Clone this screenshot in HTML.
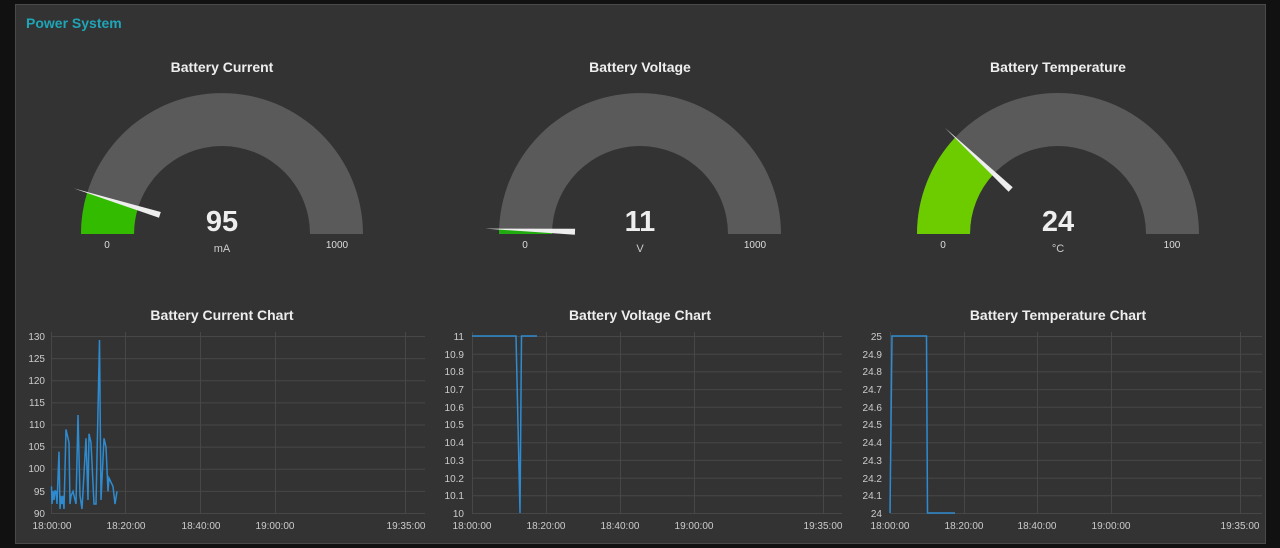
<!DOCTYPE html>
<html><head><meta charset="utf-8"><style>
html,body{margin:0;padding:0;background:#111;width:1280px;height:548px;overflow:hidden}
svg{display:block}
text{font-family:"Liberation Sans",sans-serif}
.t{font-size:14px;font-weight:bold;fill:#eee;text-anchor:middle}
.ax{font-size:10px;fill:#ccc}
.g{stroke:#474747;stroke-width:1}
</style></head><body>
<svg width="1280" height="548" viewBox="0 0 1280 548">
<rect x="0" y="0" width="1280" height="548" fill="#111"/>
<rect x="15.5" y="4.5" width="1250" height="539" fill="#333" stroke="#4a4a4a"/>
<text x="26" y="28" style="font-size:14px;font-weight:bold;fill:#1fa5b8">Power System</text>

<!-- Gauge 1 -->
<text class="t" x="222" y="72">Battery Current</text>
<path d="M81,234 A141 141 0 0 1 363,234 L310,234 A88 88 0 0 0 134,234 Z" fill="#5a5a5a"/>
<path d="M81,234 A141 141 0 0 1 87.2,192.5 L137.9,208.1 A88 88 0 0 0 134,234 Z" fill="#33bb00"/>
<polygon points="73.8,188.4 160.8,212.0 159.0,217.8" fill="#eee"/>
<text x="222" y="231" style="font-size:29px;font-weight:bold;fill:#eee;text-anchor:middle">95</text>
<text x="222" y="252" style="font-size:11px;fill:#ccc;text-anchor:middle">mA</text>
<text x="107" y="248" style="font-size:10px;fill:#ddd;text-anchor:middle">0</text>
<text x="337" y="248" style="font-size:10px;fill:#ddd;text-anchor:middle">1000</text>

<!-- Gauge 2 -->
<text class="t" x="640" y="72">Battery Voltage</text>
<path d="M499,234 A141 141 0 0 1 781,234 L728,234 A88 88 0 0 0 552,234 Z" fill="#5a5a5a"/>
<path d="M499,234 A141 141 0 0 1 499.1,229.1 L552.1,230.9 A88 88 0 0 0 552,234 Z" fill="#22aa11"/>
<polygon points="485.1,228.6 575.1,228.7 574.9,234.7" fill="#eee"/>
<text x="640" y="231" style="font-size:29px;font-weight:bold;fill:#eee;text-anchor:middle">11</text>
<text x="640" y="252" style="font-size:11px;fill:#ccc;text-anchor:middle">V</text>
<text x="525" y="248" style="font-size:10px;fill:#ddd;text-anchor:middle">0</text>
<text x="755" y="248" style="font-size:10px;fill:#ddd;text-anchor:middle">1000</text>

<!-- Gauge 3 -->
<text class="t" x="1058" y="72">Battery Temperature</text>
<path d="M917,234 A141 141 0 0 1 1199,234 L1146,234 A88 88 0 0 0 970,234 Z" fill="#5a5a5a"/>
<path d="M917,234 A141 141 0 0 1 955.2,137.5 L993.8,173.8 A88 88 0 0 0 970,234 Z" fill="#6ccc00"/>
<polygon points="945.0,127.9 1012.7,187.3 1008.6,191.7" fill="#eee"/>
<text x="1058" y="231" style="font-size:29px;font-weight:bold;fill:#eee;text-anchor:middle">24</text>
<text x="1058" y="252" style="font-size:11px;fill:#ccc;text-anchor:middle">°C</text>
<text x="943" y="248" style="font-size:10px;fill:#ddd;text-anchor:middle">0</text>
<text x="1172" y="248" style="font-size:10px;fill:#ddd;text-anchor:middle">100</text>

<!-- Chart 1 -->
<text class="t" x="222" y="320">Battery Current Chart</text>
<g class="g">
<line x1="51" y1="336.5" x2="425" y2="336.5"/><line x1="51" y1="358.6" x2="425" y2="358.6"/><line x1="51" y1="380.8" x2="425" y2="380.8"/><line x1="51" y1="402.9" x2="425" y2="402.9"/><line x1="51" y1="425" x2="425" y2="425"/><line x1="51" y1="447.1" x2="425" y2="447.1"/><line x1="51" y1="469.3" x2="425" y2="469.3"/><line x1="51" y1="491.4" x2="425" y2="491.4"/><line x1="51" y1="513.5" x2="425" y2="513.5"/>
<line x1="51.5" y1="332" x2="51.5" y2="513"/><line x1="125.5" y1="332" x2="125.5" y2="513"/><line x1="200.5" y1="332" x2="200.5" y2="513"/><line x1="275.5" y1="332" x2="275.5" y2="513"/><line x1="405.5" y1="332" x2="405.5" y2="513"/>
</g>
<g class="ax" text-anchor="end">
<text x="45" y="340">130</text><text x="45" y="362">125</text><text x="45" y="384">120</text><text x="45" y="406">115</text><text x="45" y="428">110</text><text x="45" y="450">105</text><text x="45" y="472">100</text><text x="45" y="495">95</text><text x="45" y="517">90</text>
</g>
<g class="ax" text-anchor="middle">
<text x="52" y="529">18:00:00</text><text x="126" y="529">18:20:00</text><text x="201" y="529">18:40:00</text><text x="275" y="529">19:00:00</text><text x="406" y="529">19:35:00</text>
</g>
<polyline fill="none" stroke="#2e8bd0" stroke-width="1.5" points="51.5,486.4 52,504 53,490.9 54,500 55,490.9 56,491.4 57,504 59,451.6 60,509 61,495.8 62,504 63,495.8 64,509 66,429.4 69,442.7 70,504 71,495.8 73,491.4 76,504 78,415 80,495.8 82,509 86,438.3 88,500 89,433.8 91,442.7 94,504 96,504 99.5,340 101,500 104,438.3 106,447 108,491.4 109,478 113,486.4 115,504 117,491.4"/>

<!-- Chart 2 -->
<text class="t" x="640" y="320">Battery Voltage Chart</text>
<g class="g">
<line x1="472" y1="336.5" x2="842" y2="336.5"/><line x1="472" y1="354.2" x2="842" y2="354.2"/><line x1="472" y1="371.9" x2="842" y2="371.9"/><line x1="472" y1="389.6" x2="842" y2="389.6"/><line x1="472" y1="407.3" x2="842" y2="407.3"/><line x1="472" y1="425" x2="842" y2="425"/><line x1="472" y1="442.7" x2="842" y2="442.7"/><line x1="472" y1="460.4" x2="842" y2="460.4"/><line x1="472" y1="478.1" x2="842" y2="478.1"/><line x1="472" y1="495.8" x2="842" y2="495.8"/><line x1="472" y1="513.5" x2="842" y2="513.5"/>
<line x1="472.5" y1="332" x2="472.5" y2="513"/><line x1="546.5" y1="332" x2="546.5" y2="513"/><line x1="620.5" y1="332" x2="620.5" y2="513"/><line x1="694.5" y1="332" x2="694.5" y2="513"/><line x1="823.5" y1="332" x2="823.5" y2="513"/>
</g>
<g class="ax" text-anchor="end">
<text x="464" y="340">11</text><text x="464" y="358">10.9</text><text x="464" y="375">10.8</text><text x="464" y="393">10.7</text><text x="464" y="411">10.6</text><text x="464" y="428">10.5</text><text x="464" y="446">10.4</text><text x="464" y="464">10.3</text><text x="464" y="482">10.2</text><text x="464" y="499">10.1</text><text x="464" y="517">10</text>
</g>
<g class="ax" text-anchor="middle">
<text x="472" y="529">18:00:00</text><text x="546" y="529">18:20:00</text><text x="620" y="529">18:40:00</text><text x="694" y="529">19:00:00</text><text x="823" y="529">19:35:00</text>
</g>
<polyline fill="none" stroke="#2e8bd0" stroke-width="1.5" points="472,336 516,336 520,513 521.5,336 537,336"/>

<!-- Chart 3 -->
<text class="t" x="1058" y="320">Battery Temperature Chart</text>
<g class="g">
<line x1="890" y1="336.5" x2="1262" y2="336.5"/><line x1="890" y1="354.2" x2="1262" y2="354.2"/><line x1="890" y1="371.9" x2="1262" y2="371.9"/><line x1="890" y1="389.6" x2="1262" y2="389.6"/><line x1="890" y1="407.3" x2="1262" y2="407.3"/><line x1="890" y1="425" x2="1262" y2="425"/><line x1="890" y1="442.7" x2="1262" y2="442.7"/><line x1="890" y1="460.4" x2="1262" y2="460.4"/><line x1="890" y1="478.1" x2="1262" y2="478.1"/><line x1="890" y1="495.8" x2="1262" y2="495.8"/><line x1="890" y1="513.5" x2="1262" y2="513.5"/>
<line x1="890.5" y1="332" x2="890.5" y2="513"/><line x1="964.5" y1="332" x2="964.5" y2="513"/><line x1="1037.5" y1="332" x2="1037.5" y2="513"/><line x1="1111.5" y1="332" x2="1111.5" y2="513"/><line x1="1240.5" y1="332" x2="1240.5" y2="513"/>
</g>
<g class="ax" text-anchor="end">
<text x="882" y="340">25</text><text x="882" y="358">24.9</text><text x="882" y="375">24.8</text><text x="882" y="393">24.7</text><text x="882" y="411">24.6</text><text x="882" y="428">24.5</text><text x="882" y="446">24.4</text><text x="882" y="464">24.3</text><text x="882" y="482">24.2</text><text x="882" y="499">24.1</text><text x="882" y="517">24</text>
</g>
<g class="ax" text-anchor="middle">
<text x="890" y="529">18:00:00</text><text x="964" y="529">18:20:00</text><text x="1037" y="529">18:40:00</text><text x="1111" y="529">19:00:00</text><text x="1240" y="529">19:35:00</text>
</g>
<polyline fill="none" stroke="#2e8bd0" stroke-width="1.5" points="890,513 892,336 926.5,336 927.5,513 955,513"/>
</svg>
</body></html>
